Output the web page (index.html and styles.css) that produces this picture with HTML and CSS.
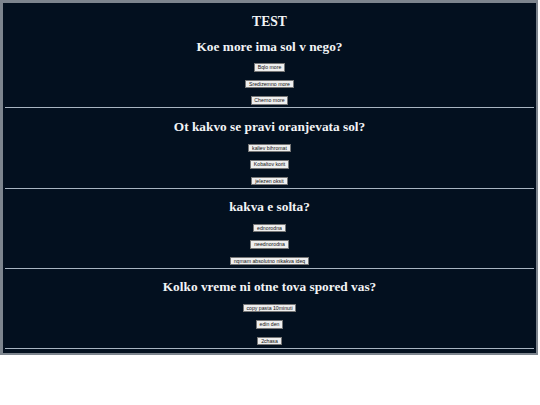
FILE: index.html
```html
<!DOCTYPE html>
<html>
<head>
<meta charset="utf-8">
<link rel="stylesheet" href="styles.css">
</head>
<body>
<div class="page">
  <h1 class="title">TEST</h1>
  <div class="section">
    <h2 class="question">Koe more ima sol v nego?</h2>
    <div class="answers">
      <button class="answer">Bqlo more</button>
      <button class="answer">Sredizemno more</button>
      <button class="answer">Cherno more</button>
    </div>
    <hr class="rule">
  </div>
  <div class="section">
    <h2 class="question">Ot kakvo se pravi oranjevata sol?</h2>
    <div class="answers">
      <button class="answer">kaliev bihromat</button>
      <button class="answer">Kobaltov korit</button>
      <button class="answer">jelezen oksit</button>
    </div>
    <hr class="rule">
  </div>
  <div class="section">
    <h2 class="question">kakva e solta?</h2>
    <div class="answers">
      <button class="answer">ednorodna</button>
      <button class="answer">neednorodna</button>
      <button class="answer">nqmam absolutno nikakva ideq</button>
    </div>
    <hr class="rule">
  </div>
  <div class="section">
    <h2 class="question">Kolko vreme ni otne tova spored vas?</h2>
    <div class="answers">
      <button class="answer">copy pasta 10minuti</button>
      <button class="answer">edin den</button>
      <button class="answer">2chasa</button>
    </div>
    <hr class="rule">
  </div>
</div>
</body>
</html>
```
FILE: styles.css
```css
html, body {
  margin: 0;
  padding: 0;
  background: #ffffff;
}
.page {
  margin: 0 2px 0 0;
  background: #03101f;
  border-style: solid;
  border-color: #7d858e;
  border-width: 3px 2px 2px 3px;
  padding: 10.8px 0 4.4px 0;
  font-family: "Liberation Serif", serif;
  color: #f2f4f6;
}
.title {
  margin: 0 0 -1.5px 0;
  font-size: 13.6px;
  line-height: 16px;
  font-weight: bold;
  text-align: center;
}
.section {
  padding-top: 10.5px;
}
.question {
  margin: 0 0 8.6px 0;
  font-size: 13.33px;
  line-height: 16px;
  font-weight: bold;
  text-align: center;
}
.answers {
  display: flex;
  flex-direction: column;
  align-items: center;
  gap: 8px;
}
.answer {
  font-family: "Liberation Sans", Arial, sans-serif;
  font-size: 5.2px;
  line-height: 6.5px;
  padding: 0 2.8px;
  margin: 0;
  border: 1px solid #767676;
  border-radius: 0;
  background: #efefef;
  color: #111111;
}
.rule {
  margin: 2.6px 2px 0 2px;
  border: 0;
  height: 1px;
  background: #a9b5c1;
}
```
